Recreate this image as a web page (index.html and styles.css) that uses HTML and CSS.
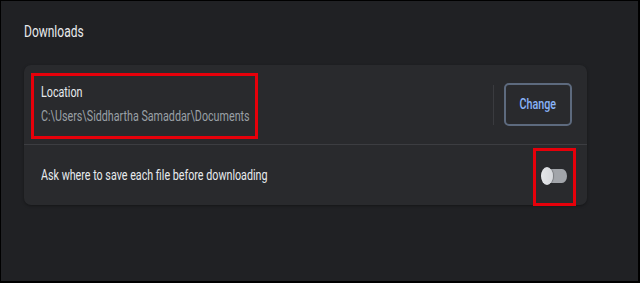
FILE: index.html
```html
<!DOCTYPE html>
<html>
<head>
<meta charset="utf-8">
<link rel="stylesheet" href="styles.css">
</head>
<body>
<div class="page">
  <h2 class="title"><span class="cond">Downloads</span></h2>
  <div class="card">
    <div class="row row-loc">
      <div class="loc-text">
        <div class="label"><span class="cond">Location</span></div>
        <div class="path"><span class="cond">C:\Users\Siddhartha Samaddar\Documents</span></div>
      </div>
      <div class="sep"></div>
      <button class="btn"><span class="cond mid">Change</span></button>
    </div>
    <div class="row row-ask">
      <div class="label"><span class="cond">Ask where to save each file before downloading</span></div>
      <div class="toggle"><div class="track"></div><div class="knob"></div></div>
    </div>
    <div class="mark mark-loc"></div>
    <div class="mark mark-tog"></div>
  </div>
</div>
</body>
</html>
```
FILE: styles.css
```css
html { background: #000; margin: 0; padding: 0; }
body { margin: 0; padding: 1px 2px 2px 1px; }
.page {
  background: #202124;
  height: 280px;
  padding: 21px 0 0 23px;
  box-sizing: border-box;
  font-family: Roboto, "Liberation Sans", sans-serif;
}
.cond {
  display: inline-block;
  white-space: nowrap;
  transform: scaleX(0.74);
  transform-origin: left center;
}
.title .cond { transform: scaleX(0.75); }
.cond.mid { transform-origin: center center; }
.title {
  margin: 0;
  font-size: 16px;
  line-height: 20px;
  font-weight: 400;
  color: #e8eaed;
  height: 20px;
}
.card {
  position: relative;
  margin-top: 23px;
  width: 563px;
  background: #292a2d;
  border-radius: 7px;
  box-shadow: 0 1px 3px rgba(0,0,0,0.35);
}
.row {
  display: flex;
  align-items: center;
  padding: 0 15px 0 17px;
  box-sizing: border-box;
}
.row-loc {
  height: 80px;
  border-bottom: 1px solid #3c3d41;
}
.row-ask { height: 60px; padding-right: 20px; padding-top: 1px; }
.loc-text { flex: 1; display: flex; flex-direction: column; gap: 4px; padding-top: 1px; }
.label {
  font-size: 14.5px;
  line-height: 20px;
  color: #e8eaed;
  flex: 1;
}
.path {
  font-size: 14.5px;
  line-height: 20px;
  color: #9aa0a6;
}
.sep {
  width: 1px;
  height: 40px;
  background: #3a3b3f;
  margin-right: 10px;
}
.btn {
  width: 68px;
  height: 43px;
  box-sizing: border-box;
  border: 2px solid #5d6a7e;
  border-radius: 5px;
  background: #292a2d;
  color: #8ab4f8;
  font-family: Roboto, "Liberation Sans", sans-serif;
  font-size: 14.5px;
  font-weight: 500;
  display: flex;
  align-items: center;
  justify-content: center;
  padding: 0 0 1px 0;
}
.toggle {
  position: relative;
  width: 26px;
  height: 18px;
}
.track {
  position: absolute;
  left: 5px;
  top: 2px;
  width: 21px;
  height: 14px;
  border-radius: 5px / 7px;
  background: #a2a5aa;
}
.knob {
  position: absolute;
  left: 0;
  top: 0;
  width: 12px;
  height: 18px;
  border-radius: 50%;
  background: linear-gradient(90deg, #e4e6e9, #d6d8dc);
  box-shadow: 1px 0 1px rgba(0,0,0,0.25);
}
.mark {
  position: absolute;
  border: 3px solid #e6000a;
  box-sizing: border-box;
}
.mark-loc { left: 7px; top: 8px; width: 227px; height: 66px; }
.mark-tog { left: 509px; top: 83px; width: 43px; height: 58px; }
```
